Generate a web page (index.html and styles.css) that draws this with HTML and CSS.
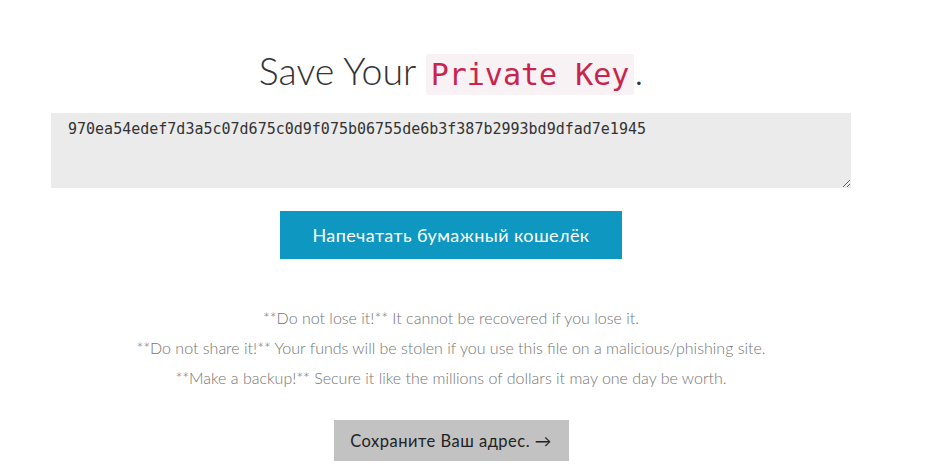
FILE: index.html
```html
<!DOCTYPE html>
<html lang="ru">
<head>
    <meta charset="UTF-8">
    <title>Save Your Private Key</title>
    <link rel="stylesheet" href="styles.css">
</head>
<body>
    <main class="wallet">
        <h1 class="title">Save Your <code>Private Key</code>.</h1>
        <textarea class="key-box" readonly>970ea54edef7d3a5c07d675c0d9f075b06755de6b3f387b2993bd9dfad7e1945</textarea>
        <button class="btn-print" type="button">Напечатать бумажный кошелёк</button>
        <div class="warnings">
            <p>**Do not lose it!** It cannot be recovered if you lose it.</p>
            <p>**Do not share it!** Your funds will be stolen if you use this file on a malicious/phishing site.</p>
            <p>**Make a backup!** Secure it like the millions of dollars it may one day be worth.</p>
        </div>
        <button class="btn-next" type="button">Сохраните Ваш адрес. &rarr;</button>
    </main>
</body>
</html>
```

FILE: styles.css
```css
body { margin: 0; font-family: Lato, "Open Sans", sans-serif; background: #fff; color: #333; }
.wallet { width: 800px; margin: 0 0 0 51px; padding-top: 47px; display: flex; flex-direction: column; align-items: center; }
.title { font-weight: 300; font-size: 37.5px; margin: 0 0 14px; line-height: 48px; color: #333; }
.title code { font-family: "DejaVu Sans Mono", monospace; font-size: 30px; color: #c7254e; background: #f9f2f4; padding: 3px 5px; border-radius: 2px; }
.key-box { width: 800px; height: 75px; box-sizing: border-box; border: none; background: #ebebeb; padding: 7px 17px; font-family: "DejaVu Sans Mono", monospace; font-size: 15px; color: #333; resize: vertical; margin: 0; }
.btn-print { margin-top: 23px; width: 342px; height: 48px; border: none; background: #0e97c0; color: #fff; font-family: Lato, sans-serif; font-size: 18px; letter-spacing: 0.4px; cursor: pointer; }
.warnings { margin-top: 44px; text-align: center; color: #757575; font-weight: 300; font-size: 16px; }
.warnings p { margin: 0; line-height: 30px; }
.btn-next { margin-top: 27px; width: 235px; height: 41px; border: none; background: #c2c2c2; color: #222; font-family: Lato, sans-serif; font-size: 16.5px; letter-spacing: 0.5px; cursor: pointer; }
```
